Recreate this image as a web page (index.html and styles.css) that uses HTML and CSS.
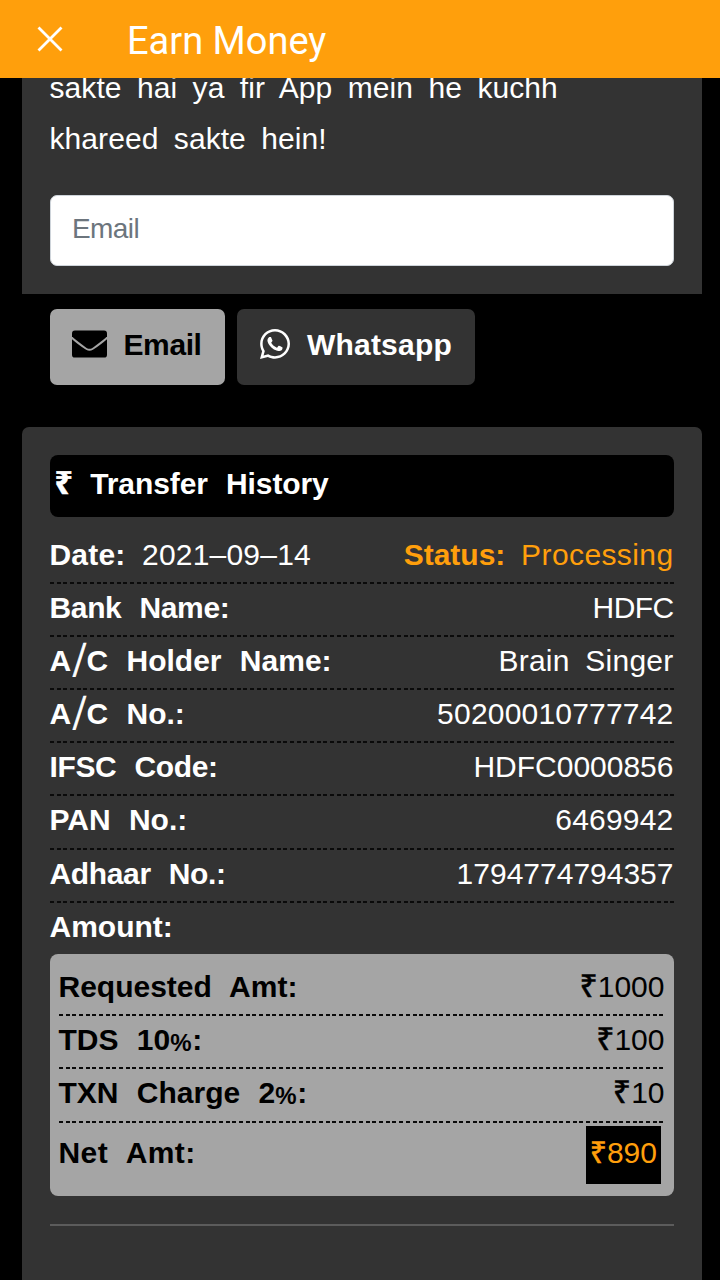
FILE: index.html
```html
<!DOCTYPE html>
<html lang="en">
<head>
  <meta charset="UTF-8">
  <title>Earn Money</title>
  <meta name="viewport" content="width=device-width, initial-scale=1.0">
  <link rel="stylesheet" href="styles.css">
</head>
<body>
  <header class="topbar">
    <svg class="close" viewBox="0 0 26 26"><path d="M1.500 1.500l23 23M24.500 1.500l-23 23"/></svg>
    <h1>Earn Money</h1>
  </header>

  <div class="card contact">
    <p>sakte hai ya fir App mein he kuchh<br>khareed sakte hein!</p>
    <input type="email" placeholder="Email">
  </div>

  <div class="buttons">
    <button class="btn btn-email">
      <svg class="icon-mail" viewBox="0 0 36 28">
        <path d="M3 0h30a3 3 0 0 1 3 3v3Q34 8.500 21 18Q18 20 15 18Q2 8.500 0 6V3a3 3 0 0 1 3-3z"/>
        <path d="M0 9Q5 13.500 14.500 20Q18 22 21.500 20Q31 13.500 36 9V25a3 3 0 0 1-3 3H3a3 3 0 0 1-3-3z"/>
      </svg>
      <span>Email</span>
    </button>
    <button class="btn btn-whatsapp">
      <svg class="icon-wa" viewBox="0 0 448 448">
        <path d="M380.900 65.100C339 23.100 283.200 0 223.900 0 101.500 0 1.900 99.600 1.900 222c0 39.100 10.200 77.300 29.600 111L0 448l117.700-30.900c32.400 17.700 68.900 27 106.100 27h.1c122.300 0 224.100-99.600 224.100-222 0-59.300-25.200-115-67.100-157zm-157 341.600c-33.200 0-65.700-8.900-94-25.700l-6.700-4-69.800 18.300L72 327.200l-4.400-7c-18.500-29.400-28.200-63.300-28.200-98.200 0-101.700 82.800-184.500 184.600-184.500 49.300 0 95.600 19.200 130.400 54.100 34.800 34.900 56.200 81.200 56.100 130.500 0 101.800-84.900 184.600-186.600 184.600zm101.200-138.200c-5.500-2.800-32.800-16.200-37.900-18-5.100-1.900-8.800-2.800-12.500 2.800-3.700 5.600-14.300 18-17.600 21.800-3.200 3.700-6.500 4.200-12 1.400-32.600-16.300-54-29.100-75.500-66-5.700-9.800 5.700-9.100 16.300-30.300 1.800-3.700.9-6.900-.5-9.700-1.400-2.800-12.500-30.100-17.100-41.200-4.500-10.800-9.100-9.300-12.500-9.500-3.200-.2-6.900-.2-10.600-.2-3.700 0-9.700 1.400-14.800 6.900-5.100 5.600-19.400 19-19.400 46.300 0 27.300 19.900 53.700 22.600 57.400 2.800 3.700 39.100 59.700 94.800 83.800 35.200 15.200 49 16.500 66.600 13.900 10.700-1.600 32.800-13.400 37.400-26.400 4.600-13 4.600-24.100 3.200-26.400-1.300-2.500-5-3.900-10.500-6.600z"/>
      </svg>
      <span>Whatsapp</span>
    </button>
  </div>

  <div class="card history">
    <h2><span class="rupee">₹</span>Transfer History</h2>

    <div class="row">
      <span class="date"><b>Date:</b> 2021–09–14</span>
      <span class="status"><b>Status:</b> Processing</span>
    </div>
    <div class="row"><b class="tight">Bank Name:</b><span class="hdfc">HDFC</span></div>
    <div class="row"><b>A<i>/</i>C Holder Name:</b><span class="holder">Brain Singer</span></div>
    <div class="row"><b>A<i>/</i>C No.:</b><span class="num">50200010777742</span></div>
    <div class="row"><b class="tight">IFSC Code:</b><span>HDFC0000856</span></div>
    <div class="row"><b>PAN No.:</b><span class="num">6469942</span></div>
    <div class="row"><b class="tight">Adhaar No.:</b><span>1794774794357</span></div>
    <div class="row last"><b>Amount:</b></div>

    <div class="amounts">
      <div class="row"><b>Requested Amt:</b><span><span class="rupee">₹</span>1000</span></div>
      <div class="row"><b>TDS 10<small>%</small>:</b><span><span class="rupee">₹</span>100</span></div>
      <div class="row"><b>TXN Charge 2<small>%</small>:</b><span><span class="rupee">₹</span>10</span></div>
      <div class="row last net"><b>Net Amt:</b><span class="total"><span class="rupee">₹</span>890</span></div>
    </div>
    <hr>
  </div>
</body>
</html>
```

FILE: styles.css
```css
* {
  box-sizing: border-box;
}
body {
  margin: 0;
  height: 1280px;
  overflow: hidden;
  background: #000;
  color: #fff;
  font-family: "Liberation Sans", Arial, sans-serif;
  font-size: 30px;
  word-spacing: 7px;
}
.topbar {
  position: relative;
  z-index: 1;
  display: flex;
  align-items: center;
  height: 77.5px;
  padding: 5px 0 0 37px;
  background: #ff9f0c;
}
.close {
  width: 26px;
  height: 26px;
  margin: -5px 64px 0 0;
  fill: none;
  stroke: #fff;
  stroke-width: 2.8;
}
h1 {
  margin: 0;
  font: 400 38px/50px Roboto, sans-serif;
  word-spacing: 0;
}
.card {
  width: 680px;
  margin-left: 21.5px;
  padding: 0 28px;
  background: #333;
}
.contact {
  height: 216px;
}
.contact p {
  margin: 0;
  position: relative;
  top: -16px;
  line-height: 51px;
  letter-spacing: 0.07px;
  white-space: nowrap;
}
.contact input {
  display: block;
  width: 100%;
  height: 71px;
  margin-top: 15px;
  padding: 0 21.5px 3px;
  border: 1px solid #ced4da;
  border-radius: 7px;
  background: #fff;
  font: inherit;
  font-size: 28px;
  letter-spacing: -0.6px;
}
.contact input::placeholder {
  color: #6c757d;
  opacity: 1;
}
.buttons {
  display: flex;
  gap: 12.5px;
  padding: 15.5px 0 0 49.5px;
}
.btn {
  display: flex;
  align-items: center;
  height: 76px;
  padding: 0 0 4px 22px;
  border: 0;
  border-radius: 7px;
  font: inherit;
  font-weight: bold;
}
.btn-email {
  width: 175px;
  background: #a5a5a5;
  color: #000;
  letter-spacing: -0.4px;
}
.btn-whatsapp {
  width: 238px;
  background: #333;
  color: #fff;
  letter-spacing: 0.2px;
}
.icon-mail {
  width: 35px;
  height: 28px;
  margin: -2px 17px 0 0;
}
.icon-wa {
  width: 30px;
  height: 30px;
  margin: -3px 17px 0 1px;
  fill: #fff;
}
.history {
  height: 870px;
  margin-top: 42px;
  padding-top: 28px;
  border-radius: 7px;
}
h2 {
  height: 62px;
  margin: 0 0 14px;
  padding-left: 5px;
  border-radius: 8px;
  background: #000;
  font-size: 30px;
  line-height: 57px;
  letter-spacing: -0.1px;
  word-spacing: 10px;
}
h2 .rupee {
  margin-right: 17.5px;
}
.row {
  display: flex;
  justify-content: space-between;
  height: 53.1px;
  line-height: 48px;
  white-space: nowrap;
  /* thin short-dash separator */
  background: repeating-linear-gradient(90deg, #0a0a0a 0 4px, transparent 4px 6.67px) left bottom / 100% 2px no-repeat;
}
.row b {
  word-spacing: 10px;
}
.row .tight {
  letter-spacing: -0.35px;
}
.row i {
  display: inline-block;
  font-style: normal;
  font-weight: normal;
  -webkit-text-stroke: 0.7px currentColor;
  transform: skewX(-8deg) scaleY(1.5);
  margin: 0 3.5px;
}
.row small {
  display: inline-block;
  width: 22px;
  font-size: 24px;
  letter-spacing: 0;
  transform: translateY(1px);
}
.date {
  letter-spacing: 0.2px;
}
.date b {
  margin-right: 1px;
}
.status {
  color: #ff9f0c;
  letter-spacing: 0.4px;
}
.status b {
  letter-spacing: 0;
}
.hdfc {
  letter-spacing: -0.6px;
}
.holder {
  letter-spacing: 0.25px;
}
.num {
  letter-spacing: 0.2px;
}
.last {
  background: none;
}
.rupee {
  font-family: "Noto Sans", sans-serif;
  font-size: 32px;
  line-height: 1;
  -webkit-text-stroke: 0.6px currentColor;
}
.amounts {
  height: 242px;
  margin-top: -1.5px;
  padding: 9px 9px 0;
  border-radius: 8px;
  background: #a5a5a5;
  color: #000;
}
.net {
  height: 70px;
  line-height: 59px;
}
.net b {
  letter-spacing: 0.4px;
}
.total {
  height: 58px;
  margin: 3px 3.5px 0 0;
  padding: 0 4px;
  background: #000;
  color: #ff9f0c;
  line-height: 53px;
}
.total .rupee {
  font-size: 30px;
}
hr {
  height: 2px;
  margin: 28px 0 0;
  border: 0;
  background: #5c5c5c;
}
```
